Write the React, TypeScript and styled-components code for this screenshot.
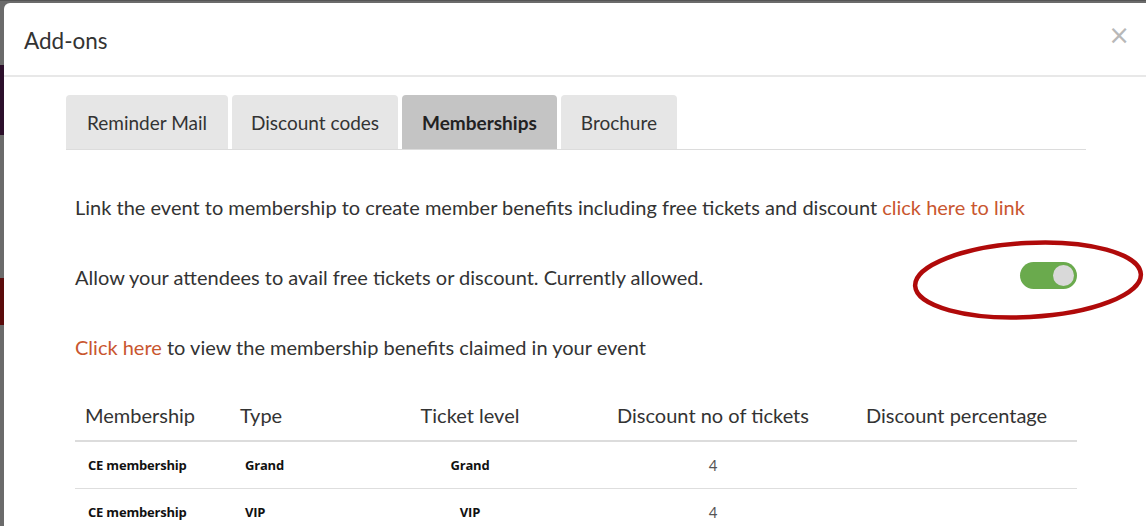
import React, { useState } from "react";
import styled, { createGlobalStyle } from "styled-components";

const GlobalStyle = createGlobalStyle`
  html, body {
    margin: 0;
    padding: 0;
    background: #6b6b6b;
    overflow: hidden;
  }
  body {
    font-family: Lato, "Open Sans", sans-serif;
    color: #333;
  }
`;

const Page = styled.div`
  display: flex;
  align-items: flex-start;
  height: 526px;
  padding-top: 2px;
  box-sizing: border-box;
  background: #6b6b6b;
  border-top: 1px solid #555;
`;

const Backdrop = styled.div`
  width: 4px;
  flex: none;
  display: flex;
  flex-direction: column;
`;

const Strip = styled.div<{ $h: number; $c: string }>`
  height: ${(p) => p.$h}px;
  background: ${(p) => p.$c};
`;

const Modal = styled.div`
  flex: none;
  width: 1160px;
  height: 540px;
  background: #fff;
  border-top-left-radius: 6px;
  display: flex;
  flex-direction: column;
`;

const Header = styled.div`
  flex: none;
  box-sizing: border-box;
  height: 74px;
  width: 1142px;
  display: flex;
  align-items: center;
  justify-content: space-between;
  padding: 2px 16px 0 20px;
  border-bottom: 2px solid #e8e8e8;
`;

const Title = styled.h4`
  margin: 0;
  font-size: 22.5px;
  font-weight: 400;
  color: #333;
`;

const Close = styled.button`
  border: 0;
  background: none;
  padding: 0;
  color: #b8b8b8;
  font-size: 26px;
  line-height: 1;
  font-family: "DejaVu Sans", sans-serif;
  cursor: pointer;
  margin-top: -10px;
`;

const Body = styled.div`
  flex: none;
  padding: 18px 0 0 62px;
  width: 1020px;
`;

const Tabs = styled.div`
  display: flex;
  gap: 4px;
  border-bottom: 1px solid #dcdcdc;
`;

const Tab = styled.button<{ $active?: boolean; $pad: number }>`
  height: 54px;
  padding: 0 ${(p) => p.$pad}px;
  border: 0;
  border-radius: 4px 4px 0 0;
  background: ${(p) => (p.$active ? "#c4c4c4" : "#e6e6e6")};
  font-family: Lato, sans-serif;
  font-size: 19px;
  font-weight: ${(p) => (p.$active ? 700 : 400)};
  color: ${(p) => (p.$active ? "#222" : "#333")};
  cursor: pointer;
`;

const Content = styled.div`
  padding: 22px 8px 0 9px;
`;

const Line = styled.div`
  height: 70px;
  display: flex;
  align-items: center;
  justify-content: space-between;
  font-size: 20px;
  color: #333;
  position: relative;
`;

const Link = styled.a`
  color: #c9562f;
  text-decoration: none;
  cursor: pointer;
`;

const Switch = styled.button<{ $on: boolean }>`
  width: 57px;
  height: 27px;
  border-radius: 14px;
  border: 0;
  padding: 3px;
  background: ${(p) => (p.$on ? "#6aaa4d" : "#cfcfcf")};
  display: flex;
  justify-content: ${(p) => (p.$on ? "flex-end" : "flex-start")};
  cursor: pointer;
  margin-right: 1px;
  margin-top: -4px;
`;

const Knob = styled.span`
  width: 21px;
  height: 21px;
  border-radius: 50%;
  background: #d9d9d9;
`;

const Marker = styled.svg`
  position: absolute;
  left: 837px;
  top: -2px;
  overflow: visible;
  pointer-events: none;
`;

const Table = styled.div`
  margin-top: 8px;
  width: 1002px;
`;

const Row = styled.div<{ $head?: boolean }>`
  display: grid;
  grid-template-columns: 155px 150px 180px 306px 211px;
  align-items: center;
  height: ${(p) => (p.$head ? 50 : 46)}px;
  border-bottom: ${(p) => (p.$head ? "2px solid #dcdcdc" : "1px solid #dedede")};
`;

const Th = styled.div<{ $align?: string; $pad?: number }>`
  font-size: 20px;
  color: #333;
  padding-left: ${(p) => p.$pad ?? 10}px;
  text-align: ${(p) => p.$align || "left"};
`;

const Td = styled.div<{ $align?: string; $num?: boolean; $pad?: number }>`
  font-family: ${(p) => (p.$num ? "Lato" : "'Open Sans'")}, sans-serif;
  font-size: ${(p) => (p.$num ? 15 : 13)}px;
  font-weight: ${(p) => (p.$num ? 400 : 700)};
  letter-spacing: ${(p) => (p.$num ? 0 : -0.2)}px;
  color: ${(p) => (p.$num ? "#555" : "#111")};
  padding-left: ${(p) => p.$pad ?? 0}px;
  text-align: ${(p) => p.$align || "left"};
`;

const rows = [
  { name: "CE membership", type: "Grand", level: "Grand", tickets: "4", pct: "" },
  { name: "CE membership", type: "VIP", level: "VIP", tickets: "4", pct: "" },
];

const tabs = [
  { label: "Reminder Mail", pad: 21 },
  { label: "Discount codes", pad: 19 },
  { label: "Memberships", pad: 20 },
  { label: "Brochure", pad: 20 },
];

export default function App() {
  const [active, setActive] = useState("Memberships");
  const [allowed, setAllowed] = useState(true);

  return (
    <>
      <GlobalStyle />
      <Page>
        <Backdrop>
          <Strip $h={62} $c="#6b6b6b" />
          <Strip $h={70} $c="#2c0f2b" />
          <Strip $h={143} $c="#6b6b6b" />
          <Strip $h={47} $c="#5b0b0b" />
          <Strip $h={200} $c="#6b6b6b" />
        </Backdrop>
        <Modal>
          <Header>
            <Title>Add-ons</Title>
            <Close>×</Close>
          </Header>
          <Body>
            <Tabs>
              {tabs.map((t) => (
                <Tab
                  key={t.label}
                  $pad={t.pad}
                  $active={t.label === active}
                  onClick={() => setActive(t.label)}
                >
                  {t.label}
                </Tab>
              ))}
            </Tabs>
            <Content>
              <Line>
                <span>
                  Link the event to membership to create member benefits including free tickets and discount{" "}
                  <Link>click here to link</Link>
                </span>
              </Line>
              <Line>
                <span>Allow your attendees to avail free tickets or discount. Currently allowed.</span>
                <Switch $on={allowed} onClick={() => setAllowed(!allowed)}>
                  <Knob />
                </Switch>
                <Marker width="232" height="80" viewBox="0 0 232 80">
                  <ellipse
                    cx="116"
                    cy="40"
                    rx="113"
                    ry="37"
                    fill="none"
                    stroke="#b00a0a"
                    strokeWidth="4.5"
                    transform="rotate(-3 116 40)"
                  />
                </Marker>
              </Line>
              <Line>
                <span>
                  <Link>Click here</Link> to view the membership benefits claimed in your event
                </span>
              </Line>
              <Table>
                <Row $head>
                  <Th>Membership</Th>
                  <Th>Type</Th>
                  <Th $align="center" $pad={0}>
                    Ticket level
                  </Th>
                  <Th $align="center" $pad={0}>
                    Discount no of tickets
                  </Th>
                  <Th $pad={0}>Discount percentage</Th>
                </Row>
                {rows.map((r, i) => (
                  <Row key={i}>
                    <Td $pad={13}>{r.name}</Td>
                    <Td $pad={15}>{r.type}</Td>
                    <Td $align="center">{r.level}</Td>
                    <Td $align="center" $num>
                      {r.tickets}
                    </Td>
                    <Td>{r.pct}</Td>
                  </Row>
                ))}
              </Table>
            </Content>
          </Body>
        </Modal>
      </Page>
    </>
  );
}
